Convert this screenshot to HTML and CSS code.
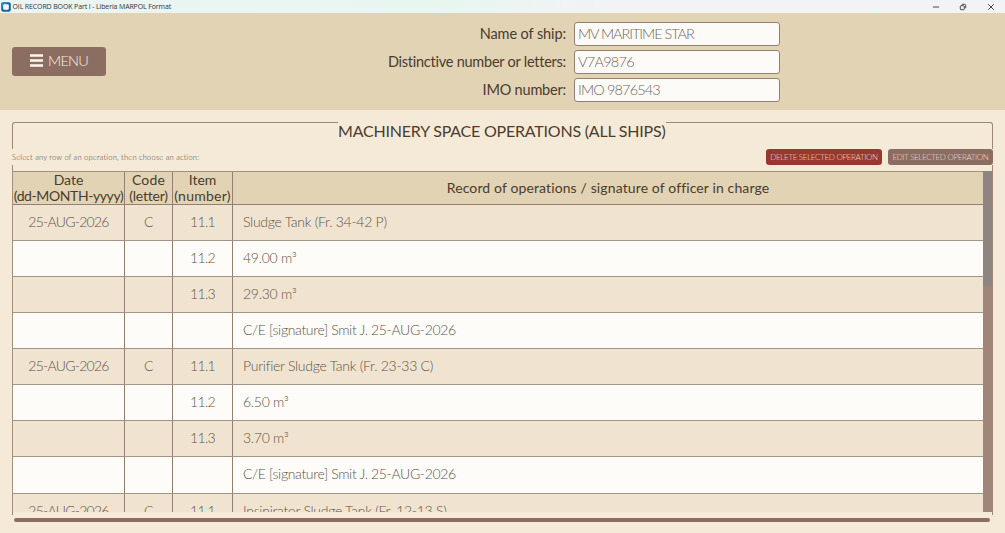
FILE: index.html
```
<!DOCTYPE html>
<html lang="en">
<head>
    <meta charset="UTF-8">
    <meta name="viewport" content="width=device-width, initial-scale=1.0">
    <title>OIL RECORD BOOK Part I - Liberia MARPOL Format</title>
    <link rel="stylesheet" href="styles.css">
</head>
<body>
    <div class="titlebar">
        <svg class="app-icon" viewBox="0 0 10 10">
            <rect x="0.2" y="0.2" width="9.6" height="9.6" rx="2" fill="#1565a5"/>
            <path d="M0.2 6V2.2a2 2 0 0 1 2-2H7z" fill="#1691d0"/>
            <rect x="2.2" y="2.2" width="5.6" height="5.6" rx="1.4" fill="#fff"/>
        </svg>
        <span class="window-title">OIL RECORD BOOK Part I - Liberia MARPOL Format</span>
        <div class="window-buttons">
            <svg viewBox="0 0 8 8"><path d="M1 4h6"/></svg>
            <svg viewBox="0 0 8 8"><rect x="1.3" y="2.7" width="4" height="4" rx="0.8"/><path d="M2.8 1.3h2.7a1.2 1.2 0 0 1 1.2 1.2v2.7"/></svg>
            <svg viewBox="0 0 8 8"><path d="M1.2 1.2l5.6 5.6M6.8 1.2L1.2 6.8"/></svg>
        </div>
    </div>

    <header class="header">
        <button class="menu-button">
            <svg viewBox="0 0 13 13"><path d="M0 1.5h13M0 6.5h13M0 11.5h13"/></svg>
            <span>MENU</span>
        </button>
        <div class="ship-form">
            <div class="label"><span class="l-ship">Name of ship:</span></div>
            <div class="field"><span class="v-ship">MV MARITIME STAR</span></div>
            <div class="label"><span class="l-letters">Distinctive number or letters:</span></div>
            <div class="field"><span class="v-letters">V7A9876</span></div>
            <div class="label"><span class="l-imo">IMO number:</span></div>
            <div class="field"><span class="v-imo">IMO 9876543</span></div>
        </div>
    </header>

    <main class="content">
        <div class="legend-row">
            <div class="line line-left"></div>
            <h1>MACHINERY SPACE OPERATIONS (ALL SHIPS)</h1>
            <div class="line line-right"></div>
        </div>
        <div class="actions">
            <span class="hint">Select any row of an operation, then choose an action:</span>
            <button class="action delete">DELETE SELECTED OPERATION</button>
            <button class="action edit">EDIT SELECTED OPERATION</button>
        </div>
        <div class="sides"></div>

        <div class="table-wrap">
            <div class="table">
                <div class="row head">
                    <div><span>Date</span><span class="h-date">(dd-MONTH-yyyy)</span></div>
                    <div><span class="h-wide">Code</span><span class="h-code">(letter)</span></div>
                    <div><span>Item</span><span class="h-item">(number)</span></div>
                    <div><span class="h-record">Record of operations / signature of officer in charge</span></div>
                </div>
                <div class="row"><div class="date">25-AUG-2026</div><div>C</div><div class="item">11.1</div><div>Sludge Tank (Fr. 34-42 P)</div></div>
                <div class="row"><div></div><div></div><div class="item">11.2</div><div>49.00 m³</div></div>
                <div class="row"><div></div><div></div><div class="item">11.3</div><div>29.30 m³</div></div>
                <div class="row"><div></div><div></div><div></div><div class="sign">C/E [signature] Smit J. 25-AUG-2026</div></div>
                <div class="row"><div class="date">25-AUG-2026</div><div>C</div><div class="item">11.1</div><div>Purifier Sludge Tank (Fr. 23-33 C)</div></div>
                <div class="row"><div></div><div></div><div class="item">11.2</div><div>6.50 m³</div></div>
                <div class="row"><div></div><div></div><div class="item">11.3</div><div>3.70 m³</div></div>
                <div class="row"><div></div><div></div><div></div><div class="sign">C/E [signature] Smit J. 25-AUG-2026</div></div>
                <div class="row"><div class="date">25-AUG-2026</div><div>C</div><div class="item">11.1</div><div>Insinirator Sludge Tank (Fr. 12-13 S)</div></div>
            </div>
            <div class="scroll-y"><div class="thumb"></div></div>
        </div>
        <div class="sides bottom"></div>
        <div class="scroll-x"></div>
    </main>
</body>
</html>
```
FILE: styles.css
```
* {
    box-sizing: border-box;
}
body {
    margin: 0;
    height: 533px;
    overflow: hidden;
    background-color: #f4ead7;
    color: #4b3c2e;
    font-family: Lato, sans-serif;
    font-weight: 300;
}
button {
    border: none;
    padding: 0;
    font-family: inherit;
    font-weight: inherit;
    white-space: nowrap;
}
span, h1 {
    white-space: nowrap;
}
.titlebar {
    height: 13px;
    display: flex;
    align-items: center;
    background: linear-gradient(90deg, #ebf5f2 0%, #e8f6f0 45%, #f1f3f5 60%, #f3f3f5 100%);
}
.app-icon {
    width: 10px;
    height: 10px;
    margin-left: 0.5px;
}
.window-title {
    margin-left: 2px;
    font: 400 7px "Open Sans", sans-serif;
    letter-spacing: -0.13px;
    color: #333;
}
.window-buttons {
    margin-left: auto;
    margin-right: 10.5px;
    display: flex;
    gap: 19.5px;
}
.window-buttons svg {
    width: 8px;
    height: 8px;
    fill: none;
    stroke: #333;
    stroke-width: 0.9;
}

.header {
    height: 97px;
    display: flex;
    align-items: flex-start;
    background-color: #e1d3b3;
}
.menu-button {
    width: 94px;
    height: 29px;
    margin: 33.5px 0 0 12px;
    padding-bottom: 1px;
    display: flex;
    align-items: center;
    justify-content: center;
    gap: 5px;
    border-radius: 3px;
    background-color: #8c6d62;
    color: #f8efe6;
    font-size: 14.5px;
    letter-spacing: -0.8px;
}
.menu-button svg {
    width: 13px;
    height: 13px;
    stroke: #fff8f0;
    stroke-width: 2.6;
}
.ship-form {
    margin: 8.5px 0 0 auto;
    padding-right: 225px;
    display: grid;
    grid-template-columns: auto 206px;
    grid-auto-rows: 24px;
    column-gap: 8px;
    row-gap: 4.2px;
}
.label {
    font-size: 14.5px;
    font-weight: 400;
    line-height: 24px;
    text-align: right;
}
.l-ship {
    letter-spacing: -0.1px;
}
.l-letters {
    letter-spacing: -0.24px;
}
.l-imo {
    letter-spacing: -0.2px;
}
.field {
    border: 1.5px solid #948072;
    border-radius: 3px;
    background-color: #fdfbf7;
    color: #6f675e;
    padding-left: 3px;
    font-size: 14.5px;
    line-height: 21px;
}
.v-ship {
    letter-spacing: -1.05px;
}
.v-letters {
    letter-spacing: -0.75px;
}
.v-imo {
    letter-spacing: -0.85px;
}

.content {
    padding: 12px 12px 0;
}
.legend-row {
    height: 27px;
    display: flex;
}
.line {
    border-top: 1.5px solid #9b8878;
}
.line-left {
    width: 326px;
    border-left: 1.5px solid #9b8878;
    border-top-left-radius: 3px;
}
.line-right {
    flex: 1;
    border-right: 1.5px solid #9b8878;
    border-top-right-radius: 3px;
}
h1 {
    width: 328px;
    margin: 0;
    font-size: 16px;
    font-weight: 400;
    line-height: 18px;
    letter-spacing: -0.21px;
}
.actions {
    height: 16px;
    display: flex;
    align-items: center;
    gap: 6px;
}
.hint {
    margin-right: auto;
    font-size: 7.5px;
    letter-spacing: 0.22px;
    color: #4f443a;
}
.action {
    height: 16px;
    border-radius: 3px;
    font-size: 8px;
    line-height: 16px;
    color: #f2dccf;
}
.delete {
    width: 116px;
    background-color: #96392f;
    letter-spacing: -0.32px;
}
.edit {
    width: 105px;
    background-color: #8c6d62;
    letter-spacing: -0.35px;
}
.sides {
    height: 6px;
    border: solid #9b8878;
    border-width: 0 1px;
}
.sides.bottom {
    height: 3px;
}

.table-wrap {
    height: 341px;
    display: flex;
    overflow: hidden;
}
.table {
    flex: 1;
    border: solid #a39180;
    border-width: 1px 0 0 1px;
}
.row {
    display: grid;
    grid-template-columns: 112px 48px 60px 1fr;
    height: 36.14px;
    background-color: #fdfcf9;
    color: #5e544a;
    font-size: 14px;
    line-height: 33px;
    letter-spacing: -0.27px;
    text-align: center;
}
.row:nth-child(even) {
    background-color: #f0e4d0;
}
.row > div {
    border-right: 1px solid #948072;
    border-bottom: 1px solid #a39586;
    white-space: nowrap;
}
.row > div:last-child {
    padding-left: 10px;
    border-right: none;
    text-align: left;
}
.row .date {
    letter-spacing: -0.73px;
}
.row .item {
    letter-spacing: -0.6px;
}
.row .sign {
    letter-spacing: -0.34px;
}
.row.head {
    height: 32.5px;
    background-color: #e1d3b3;
    color: #4b3c2e;
    font-weight: 400;
    line-height: 16px;
    letter-spacing: 0;
}
.head > div {
    display: flex;
    flex-direction: column;
    align-items: center;
    justify-content: center;
    border-bottom: 1.5px solid #948072;
}
.head > div:last-child {
    padding: 0;
}
.h-date {
    letter-spacing: -0.4px;
}
.h-wide {
    letter-spacing: 0.2px;
}
.h-code {
    letter-spacing: -0.2px;
}
.h-item {
    letter-spacing: 0.25px;
}
.h-record {
    letter-spacing: 0.12px;
}
.scroll-y {
    width: 10px;
    background-color: #a08679;
}
.thumb {
    width: 9px;
    height: 115px;
    background-color: #8e8580;
}
.scroll-x {
    width: 976px;
    height: 4px;
    margin: 3px 0 0 2px;
    border-radius: 2px;
    background-color: #8c6d62;
}
```
